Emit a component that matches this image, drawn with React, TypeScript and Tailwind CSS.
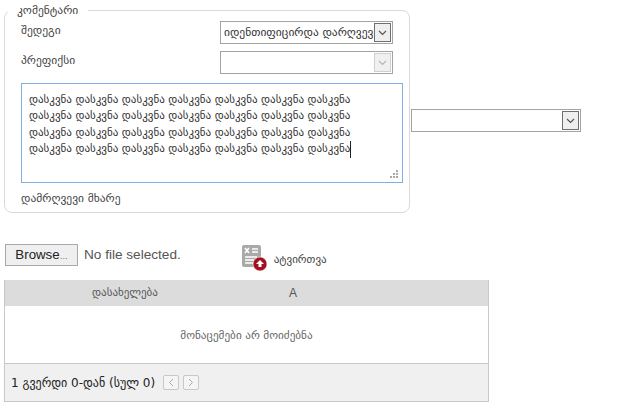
const geo = { fontFamily: '"DejaVu Sans", sans-serif' };

function Chevron({ color }: { color: string }) {
  return (
    <svg width="9" height="6" viewBox="0 0 9 6" fill="none">
      <path d="M1 1l3.5 3.5L8 1" stroke={color} strokeWidth="1.2" />
    </svg>
  );
}

function Select({ text, disabled, width }: { text?: string; disabled?: boolean; width: string }) {
  return (
    <div className={`${width} h-[23px] flex items-center border border-[#a3a3a3] bg-white p-px`}>
      <div className="flex-1 overflow-hidden whitespace-nowrap pl-[2px] text-[11.5px] text-[#333]">{text}</div>
      <div
        className={
          disabled
            ? "w-[17px] h-[19px] shrink-0 flex items-center justify-center border border-[#d0d0d0] bg-[#f0f0f0]"
            : "w-[17px] h-[19px] shrink-0 flex items-center justify-center border border-[#6f6f6f] bg-[#efefef]"
        }
      >
        <Chevron color={disabled ? "#b5b5b5" : "#555"} />
      </div>
    </div>
  );
}

const line = "დასკვნა დასკვნა დასკვნა დასკვნა დასკვნა დასკვნა დასკვნა";

export default function App() {
  return (
    <div className="w-[625px] h-[402px] overflow-hidden bg-white pl-[4px] text-[#444]" style={geo}>
      <div className="flex items-start">
        <fieldset className="w-[406px] h-[210px] mt-[3px] border border-[#d9d9d9] rounded-[8px] pl-[16px] pr-[6px]">
          <legend className="-ml-[13px] pl-[9px] pr-[10px] text-[11.5px] leading-[14px] text-[#444]">კომენტარი</legend>
          <div className="flex items-center justify-between h-[23px] mt-[4px] pr-[10px]">
            <span className="-mt-[3px] text-[11.5px]">შედეგი</span>
            <Select width="w-[173px]" text="იდენთიფიცირდა დარღვევა" />
          </div>
          <div className="flex items-center justify-between h-[23px] mt-[7px] pr-[10px]">
            <span className="-mt-[3px] text-[11.5px]">პრეფიქსი</span>
            <Select width="w-[173px]" disabled />
          </div>
          <div className="relative w-[382px] h-[100px] mt-[9px] border border-[#7fb0e3] px-[7px] pt-[8px] text-[11px] leading-[16.3px] text-[#333] whitespace-nowrap overflow-hidden">
            <div>{line}</div>
            <div>{line}</div>
            <div>{line}</div>
            <div className="flex items-center">
              {line}
              <span className="inline-block w-px h-[17px] bg-[#222]" />
            </div>
            <svg className="absolute right-[3px] bottom-[3px]" width="9" height="9" viewBox="0 0 9 9" fill="#a9a9a9">
              <rect x="6" y="0" width="2" height="2" />
              <rect x="3" y="3" width="2" height="2" />
              <rect x="6" y="3" width="2" height="2" />
              <rect x="0" y="6" width="2" height="2" />
              <rect x="3" y="6" width="2" height="2" />
              <rect x="6" y="6" width="2" height="2" />
            </svg>
          </div>
          <div className="mt-[8px] text-[11.5px] leading-[14px]">დამრღვევი მხარე</div>
        </fieldset>
        <div className="ml-[1px] mt-[109px]"><Select width="w-[170px]" /></div>
      </div>

      <div className="flex items-start mt-[31px] pl-[1px]">
        <button
          className="w-[73px] h-[22px] border border-[#a9a9a9] bg-[#efefef] text-[13.3px] leading-[20px] text-[#222]"
          style={{ fontFamily: '"Liberation Sans", sans-serif' }}
        >
          Browse<span className="text-[8px]">…</span>
        </button>
        <span
          className="ml-[6px] text-[13.6px] leading-[22px] text-[#555]"
          style={{ fontFamily: '"Liberation Sans", sans-serif' }}
        >
          No file selected.
        </span>
        <svg className="ml-[61px] mt-[1px]" width="26" height="26" viewBox="0 0 26 26">
          <rect x="0" y="0" width="19" height="22" rx="2" fill="#a9a9a9" />
          <path d="M3 3l4 5M7 3l-4 5" stroke="#fff" strokeWidth="1.6" />
          <path d="M10 4h6M10 7h6M3 12h12M3 15h9M3 18h8" stroke="#fff" strokeWidth="1.3" />
          <circle cx="18" cy="19" r="7" fill="#a3101f" stroke="#fff" strokeWidth="0.6" />
          <path d="M18 15l-4 4h2.5v3h3v-3H22z" fill="#fff" />
        </svg>
        <span className="ml-[6px] mt-[8px] text-[11px] leading-[16px] text-[#444]">ატვირთვა</span>
      </div>

      <div className="w-[485px] h-[122px] mt-[9px] border-x border-b border-[#c8c8c8] flex flex-col">
        <div className="h-[26px] bg-[#dcdcdc] flex items-center text-[11px] text-[#555]">
          <span className="w-[240px] text-center">დასახელება</span>
          <span className="w-[96px] text-center text-[12px]" style={{ fontFamily: '"Liberation Sans", sans-serif' }}>A</span>
        </div>
        <div className="h-[58px] pt-[4px] flex items-center justify-center text-[11.2px] text-[#666] border-b border-[#c8c8c8]">
          მონაცემები არ მოიძებნა
        </div>
        <div className="flex-1 bg-[#f0f0f0] flex items-center pl-[6px] text-[12px] text-[#222]">
          <span>1 გვერდი 0-დან (სულ 0)</span>
          <div className="ml-[8px] w-[16px] h-[15px] border border-[#c8c8c8] rounded-[2px] bg-[#f5f5f5] flex items-center justify-center">
            <svg width="6" height="9" viewBox="0 0 6 9" fill="none"><path d="M5 1L1.5 4.5 5 8" stroke="#aaa" /></svg>
          </div>
          <div className="ml-[4px] w-[16px] h-[15px] border border-[#c8c8c8] rounded-[2px] bg-[#f5f5f5] flex items-center justify-center">
            <svg width="6" height="9" viewBox="0 0 6 9" fill="none"><path d="M1 1l3.5 3.5L1 8" stroke="#aaa" /></svg>
          </div>
        </div>
      </div>
    </div>
  );
}
